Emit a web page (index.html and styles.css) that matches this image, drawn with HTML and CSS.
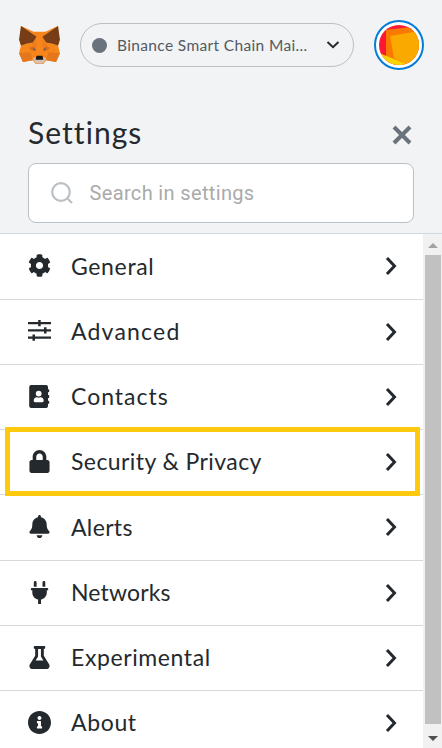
FILE: index.html
```html
<!DOCTYPE html>
<html lang="en">
<head>
<meta charset="utf-8">
<title>Settings</title>
<link rel="stylesheet" href="styles.css">
</head>
<body>
<header class="app-header">
  <svg class="fox" viewBox="0 0 42 40">
    <path fill="#f6851b" d="M2 0 15 6H27L40 0 41 17 40 20 42 28 38 37 28 35 25 39H17L14 35 4 37 0 28 2 20 1 17Z"/>
    <path fill="#e4761b" d="M0 28 12 27 14 35 4 37ZM42 28 30 27 28 35 38 37Z"/>
    <path fill="#ee7d1c" d="M14 17 17 6 18 20 16 27 12 22ZM28 17 25 6 24 20 26 27 30 22Z"/>
    <path fill="#763d16" d="M2 0 18 11 14 17 8 18 2 20 0 14ZM40 0 24 11 28 17 34 18 40 20 42 14Z"/>
    <path fill="#dc6d1b" d="M10 22 16 21 17 26 13 25ZM32 22 26 21 25 26 29 25Z"/>
    <path fill="#5d5963" d="M13.500 23 16.500 23 17 25.500ZM28.500 23 25.500 23 25 25.500Z"/>
    <path fill="#d7c1b3" d="M14 33 18 32H24L28 33 25 38.500H17Z"/>
    <path fill="#161616" d="M18 30.500H24L25 34.500H17Z"/>
  </svg>
  <div class="network">
    <span class="dot"></span>
    <span class="network-name">Binance Smart Chain Mai...</span>
    <svg class="caret" viewBox="0 0 14 10"><path d="M1.500 2 7 7.200 12.500 2"/></svg>
  </div>
  <div class="avatar">
    <svg viewBox="0 0 40 40">
      <clipPath id="disc"><circle cx="20" cy="20" r="20"/></clipPath>
      <g clip-path="url(#disc)">
        <path fill="#fb1837" d="M0 0H40V40H0Z"/>
        <path fill="#fa7900" d="M7 5 40 1V40H7Z"/>
        <path fill="#f9d400" d="M0 28 30 40H0Z"/>
        <path fill="#fa7900" d="M7 5 14 4 17 34 10 31Z"/>
        <path fill="#faa900" d="M11 11 40 6V40H28L15 33Z"/>
      </g>
    </svg>
  </div>
</header>
<section class="settings-head">
  <div class="title-row">
    <h1>Settings</h1>
    <svg class="close" viewBox="0 0 20 20"><path d="M2 2 18 18M18 2 2 18"/></svg>
  </div>
  <div class="search">
    <svg viewBox="0 0 22 22"><circle cx="10" cy="10" r="8.800"/><path d="M16 16 21 21"/></svg>
    <span>Search in settings</span>
  </div>
</section>
<main class="body">
  <nav class="menu">
    <a class="item general">
      <svg class="icon" viewBox="0 0 512 512"><path d="M487.400 315.700l-42.600-24.600c4.300-23.200 4.300-47 0-70.200l42.600-24.600c4.900-2.800 7.100-8.600 5.500-14-11.100-35.600-30-67.800-54.700-94.600-3.800-4.100-10-5.100-14.800-2.300L380.800 110c-17.900-15.400-38.500-27.300-60.800-35.100V25.800c0-5.600-3.900-10.500-9.400-11.700-36.700-8.200-74.300-7.800-109.200 0-5.500 1.200-9.400 6.100-9.400 11.700V75c-22.200 7.900-42.800 19.800-60.800 35.100L88.700 85.500c-4.900-2.800-11-1.900-14.800 2.300-24.700 26.700-43.600 58.900-54.700 94.600-1.700 5.400.600 11.200 5.500 14L67.300 221c-4.300 23.200-4.300 47 0 70.200l-42.600 24.600c-4.900 2.800-7.100 8.600-5.500 14 11.100 35.600 30 67.800 54.700 94.600 3.800 4.100 10 5.100 14.800 2.300l42.600-24.600c17.900 15.400 38.500 27.300 60.800 35.100v49.200c0 5.600 3.900 10.500 9.400 11.700 36.700 8.200 74.300 7.800 109.200 0 5.500-1.200 9.400-6.100 9.400-11.700v-49.200c22.200-7.900 42.800-19.800 60.800-35.100l42.600 24.600c4.900 2.800 11 1.900 14.800-2.300 24.700-26.700 43.600-58.900 54.700-94.600 1.500-5.500-.700-11.300-5.600-14.100zM256 336c-44.100 0-80-35.900-80-80s35.900-80 80-80 80 35.900 80 80-35.900 80-80 80z"/></svg>
      <span class="label">General</span><svg class="chevron" viewBox="0 0 12 20"><path d="M2 2 9.500 10 2 18"/></svg>
    </a>
    <a class="item advanced">
      <svg class="icon" viewBox="0 0 23 23"><path d="M0 2H23V4.200H0ZM0 9.200H23V11.400H0ZM0 16.500H23V18.700H0ZM10.200 0H12.700V6.200H10.200ZM16 7.200H18.500V13.400H16ZM4.500 14.500H7V20.700H4.500Z"/></svg>
      <span class="label">Advanced</span><svg class="chevron" viewBox="0 0 12 20"><path d="M2 2 9.500 10 2 18"/></svg>
    </a>
    <a class="item contacts">
      <svg class="icon" viewBox="0 0 23 23"><path fill-rule="evenodd" d="M3.200 0H18Q20 0 20 2V4.200H20.600Q21.200 4.200 21.200 4.800V6.600Q21.200 7.200 20.600 7.200H20V10H20.600Q21.200 10 21.200 10.600V12.400Q21.200 13 20.600 13H20V15.800H20.600Q21.200 15.800 21.200 16.400V18.200Q21.200 18.800 20.600 18.800H20V21Q20 23 18 23H3.200Q1.200 23 1.200 21V2Q1.200 0 3.200 0ZM10.700 5.700A2.900 2.900 0 1 0 10.700 11.500 2.900 2.900 0 0 0 10.700 5.700ZM7 17.200H14.500Q15.700 17.200 15.700 16.100C15.700 13.500 14.500 12.300 12.500 12.300Q10.700 13 9 12.300C7 12.300 5.700 13.500 5.700 16.100Q5.700 17.200 7 17.200Z"/></svg>
      <span class="label">Contacts</span><svg class="chevron" viewBox="0 0 12 20"><path d="M2 2 9.500 10 2 18"/></svg>
    </a>
    <a class="item security">
      <svg class="icon" viewBox="-32 0 512 512"><path d="M400 224h-24v-72C376 68.200 307.800 0 224 0S72 68.200 72 152v72H48c-26.500 0-48 21.500-48 48v192c0 26.500 21.500 48 48 48h352c26.500 0 48-21.500 48-48V272c0-26.500-21.500-48-48-48zm-104 0H152v-72c0-39.700 32.300-72 72-72s72 32.300 72 72v72z"/></svg>
      <span class="label">Security &amp; Privacy</span><svg class="chevron" viewBox="0 0 12 20"><path d="M2 2 9.500 10 2 18"/></svg>
    </a>
    <a class="item alerts">
      <svg class="icon" viewBox="-32 0 512 512"><path d="M224 512c35.300 0 63.900-28.600 63.900-64H160.100c0 35.400 28.600 64 63.900 64zm215.400-149.700c-19.300-20.800-55.500-52-55.500-154.300 0-77.700-54.500-139.900-127.900-155.200V32c0-17.700-14.300-32-32-32s-32 14.300-32 32v20.800C118.600 68.100 64.100 130.300 64.100 208c0 102.300-36.200 133.500-55.500 154.300-6 6.400-8.700 14.200-8.600 21.700.100 16.400 13 32 32.100 32h383.800c19.100 0 32-15.600 32.100-32 .100-7.500-2.600-15.200-8.600-21.700z"/></svg>
      <span class="label">Alerts</span><svg class="chevron" viewBox="0 0 12 20"><path d="M2 2 9.500 10 2 18"/></svg>
    </a>
    <a class="item networks">
      <svg class="icon" viewBox="0 0 23 23"><path d="M5.800 5.700V1.400A1.400 1.400 0 0 1 8.600 1.400V5.700ZM14.500 5.700V1.400A1.400 1.400 0 0 1 17.300 1.400V5.700ZM3.600 7H19.500Q20.200 7 20.200 7.700V9.200H18.800V11.500C18.800 15 16.500 17.800 13 18.500V23H10.100V18.500C6.600 17.800 4.300 15 4.300 11.500V9.200H2.900V7.700Q2.900 7 3.600 7Z"/></svg>
      <span class="label">Networks</span><svg class="chevron" viewBox="0 0 12 20"><path d="M2 2 9.500 10 2 18"/></svg>
    </a>
    <a class="item experimental">
      <svg class="icon" viewBox="-32 0 512 512"><path d="M437.200 403.500L320 215V64h8c13.300 0 24-10.700 24-24V24c0-13.300-10.700-24-24-24H120c-13.300 0-24 10.700-24 24v16c0 13.300 10.700 24 24 24h8v151L10.800 403.500C-18.500 450.600 15.300 512 70.900 512h306.200c55.700 0 89.400-61.500 60.100-108.500zM137.900 320l48.200-77.600c3.700-5.200 5.800-11.600 5.800-18.400V64h64v160c0 6.900 2.200 13.200 5.800 18.400l48.200 77.600h-172z"/></svg>
      <span class="label">Experimental</span><svg class="chevron" viewBox="0 0 12 20"><path d="M2 2 9.500 10 2 18"/></svg>
    </a>
    <a class="item about">
      <svg class="icon" viewBox="8 8 496 496"><path d="M256 8C119 8 8 119.100 8 256c0 137 111 248 248 248s248-111 248-248C504 119.100 393 8 256 8zm0 110c23.200 0 42 18.800 42 42s-18.800 42-42 42-42-18.800-42-42 18.800-42 42-42zm56 254c0 6.600-5.400 12-12 12h-88c-6.600 0-12-5.400-12-12v-24c0-6.600 5.400-12 12-12h12v-64h-12c-6.600 0-12-5.400-12-12v-24c0-6.600 5.400-12 12-12h64c6.600 0 12 5.400 12 12v100h12c6.600 0 12 5.400 12 12v24z"/></svg>
      <span class="label">About</span><svg class="chevron" viewBox="0 0 12 20"><path d="M2 2 9.500 10 2 18"/></svg>
    </a>
  </nav>
  <div class="scrollbar">
    <svg class="arrow up" viewBox="0 0 10 5"><path d="M0 5 5 0 10 5Z"/></svg>
    <div class="thumb"></div>
    <svg class="arrow down" viewBox="0 0 10 5"><path d="M0 0H10L5 5Z"/></svg>
  </div>
</main>
<div class="highlight"></div>
</body>
</html>
```
FILE: styles.css
```css
* { box-sizing: border-box; }
body {
  margin: 0;
  width: 442px;
  height: 748px;
  overflow: hidden;
  position: relative;
  background: #f2f3f5;
  color: #24292e;
  font-family: Lato, "Liberation Sans", sans-serif;
}
svg { display: block; flex: none; }
.app-header {
  height: 90px;
  padding: 0 18px 0 19px;
  display: flex;
  align-items: center;
}
.fox { width: 41px; height: 39px; }
.network {
  width: 274px;
  height: 44px;
  margin-left: 20px;
  padding: 0 13px 0 11px;
  display: flex;
  align-items: center;
  border: 1px solid #bbc0c5;
  border-radius: 22px;
  color: #535a61;
}
.dot { width: 15px; height: 15px; border-radius: 50%; background: #6a737d; }
.network-name {
  flex: 1;
  margin-left: 10px;
  font-size: 15.5px;
  letter-spacing: .35px;
  white-space: nowrap;
}
.caret { width: 14px; height: 10px; fill: none; stroke: #24292e; stroke-width: 2; }
.avatar {
  width: 50px;
  height: 50px;
  margin-left: 20px;
  padding: 3px;
  border: 2px solid #037dd6;
  border-radius: 50%;
  background: #fff;
}
.avatar svg { width: 40px; height: 40px; }
.settings-head {
  height: 144px;
  padding: 22px 28px 0;
  border-bottom: 1px solid #d2d8dd;
}
.title-row { height: 51px; display: flex; justify-content: space-between; }
h1 { margin: 0; font-size: 30px; line-height: 40px; font-weight: 400; letter-spacing: 1.05px; }
.close { width: 20px; height: 20px; margin: 13px 2px 0 0; fill: none; stroke: #6a737d; stroke-width: 4; }
.search {
  height: 60px;
  padding-left: 22px;
  display: flex;
  align-items: center;
  border: 1px solid #bbc0c5;
  border-radius: 8px;
  background: #fff;
  color: #aaa;
  font: 20px Roboto, sans-serif;
  letter-spacing: .35px;
}
.search svg { width: 22px; height: 22px; margin-right: 16.5px; fill: none; stroke: #bbc0c5; stroke-width: 2.200; }
.body { height: 514px; display: flex; background: #fff; }
.menu { width: 423px; display: grid; grid-template-rows: 66px 65px 65px 65px 66px 65px 65px 57px; }
.item {
  padding: 0 26px 0 28px;
  display: flex;
  align-items: flex-start;
  border-bottom: 1px solid #d6d9dc;
}
.item:last-child { border-bottom: 0; }
.icon { width: 23px; height: 23px; margin-top: 20px; fill: #24292e; }
.label { flex: 1; margin: 15px 0 0 20px; font-size: 23px; line-height: 32px; white-space: nowrap; }
.general .label, .alerts .label { margin-top: 16px; }
.general { letter-spacing: .65px; }
.advanced { letter-spacing: 1.2px; }
.contacts { letter-spacing: 1px; }
.security { letter-spacing: .42px; }
.alerts { letter-spacing: .35px; }
.networks { letter-spacing: .15px; }
.experimental { letter-spacing: .6px; }
.about { letter-spacing: .65px; }
.chevron { width: 12px; height: 20px; margin-top: 22px; fill: none; stroke: #24292e; stroke-width: 3; }
.scrollbar {
  width: 19px;
  padding: 9px 1px 7px 2px;
  display: flex;
  flex-direction: column;
  align-items: center;
  background: #f1f1f1;
}
.arrow { width: 10px; height: 5px; }
.up { fill: #a3a3a3; }
.down { fill: #505050; margin-top: auto; }
.thumb { width: 16px; height: 469px; margin-top: 7px; background: #c1c1c1; }
.highlight {
  position: absolute;
  left: 5px;
  top: 427px;
  width: 415px;
  height: 69px;
  border: 5px solid #ffc90e;
}
```
